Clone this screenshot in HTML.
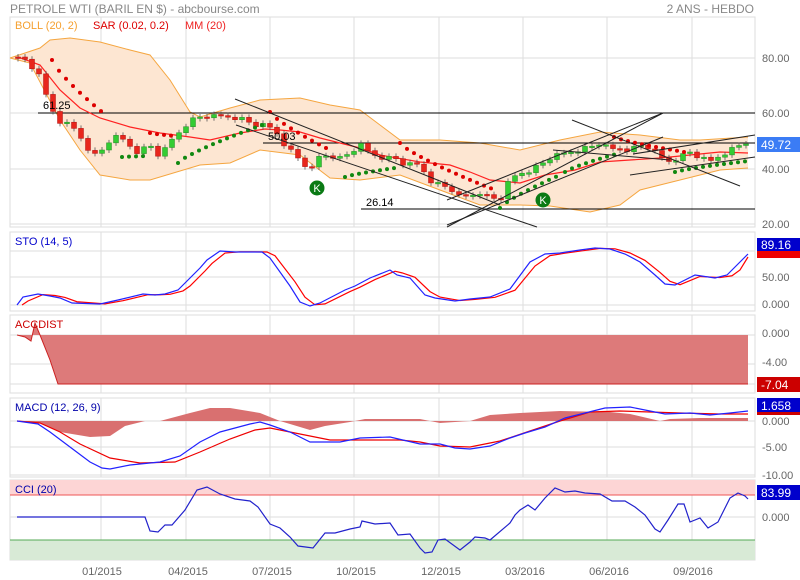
<!DOCTYPE html>
<html><head><meta charset="utf-8"><style>
html,body{margin:0;padding:0;background:#fff;width:800px;height:580px;overflow:hidden}
svg{display:block;font-family:"Liberation Sans",sans-serif}
</style></head><body>
<svg id="s" width="800" height="580" xmlns="http://www.w3.org/2000/svg">
<text x="10" y="13" font-size="12" fill="#888">PETROLE WTI (BARIL EN $) - abcbourse.com</text>
<text x="754" y="13" font-size="12" fill="#888" text-anchor="end">2 ANS - HEBDO</text>
<g id="grid" stroke="#ddd" stroke-width="1" fill="none"></g>
<g id="g"></g>
<g font-size="11">
<text x="15" y="29" fill="#f5a030">BOLL (20, 2)</text>
<text x="93" y="29" fill="#d00">SAR (0.02, 0.2)</text>
<text x="185" y="29" fill="#e22">MM (20)</text>
<text x="15" y="245" fill="#00c">STO (14, 5)</text>
<text x="15" y="328" fill="#c00">ACCDIST</text>
<text x="15" y="411" fill="#00a">MACD (12, 26, 9)</text>
<text x="15" y="493" fill="#00a">CCI (20)</text>
</g>
<g font-size="11" fill="#666">
<text x="762" y="62">80.00</text><text x="762" y="117">60.00</text><text x="762" y="173">40.00</text><text x="762" y="228">20.00</text>
<text x="762" y="281">50.00</text><text x="762" y="308">0.000</text>
<text x="762" y="337">0.000</text><text x="762" y="366">-4.00</text>
<text x="762" y="425">0.000</text><text x="762" y="451">-5.00</text><text x="762" y="479">-10.00</text>
<text x="762" y="521">0.000</text>
<text x="102" y="575" text-anchor="middle">01/2015</text><text x="188" y="575" text-anchor="middle">04/2015</text>
<text x="272" y="575" text-anchor="middle">07/2015</text><text x="356" y="575" text-anchor="middle">10/2015</text>
<text x="441" y="575" text-anchor="middle">12/2015</text><text x="525" y="575" text-anchor="middle">03/2016</text>
<text x="609" y="575" text-anchor="middle">06/2016</text><text x="693" y="575" text-anchor="middle">09/2016</text>
</g>
<rect x="757" y="137" width="43" height="15" fill="#3b7cf5"/><text x="761" y="149" font-size="12" fill="#fff">49.72</text>
<rect x="757" y="248" width="43" height="10" fill="#e00"/>
<rect x="757" y="238" width="43" height="13" fill="#00c"/><text x="761" y="249" font-size="12" fill="#fff">89.16</text>
<rect x="757" y="377" width="43" height="15" fill="#c00"/><text x="761" y="389" font-size="12" fill="#fff">-7.04</text>
<rect x="757" y="411" width="43" height="4" fill="#c00"/>
<rect x="757" y="398" width="43" height="14" fill="#00c"/><text x="761" y="410" font-size="12" fill="#fff">1.658</text>
<rect x="757" y="485" width="43" height="15" fill="#00c"/><text x="761" y="497" font-size="12" fill="#fff">83.99</text>
</svg>
<script>
var NS="http://www.w3.org/2000/svg",G=document.getElementById('g'),GR=document.getElementById('grid');
function el(t,a,p){var e=document.createElementNS(NS,t);for(var k in a)e.setAttribute(k,a[k]);(p||G).appendChild(e);return e;}
function pts(a){return a.map(function(p){return p[0]+','+p[1]}).join(' ');}
function interp(k,x){for(var i=0;i<k.length-1;i++){if(x>=k[i][0]&&x<=k[i+1][0]){var t=(x-k[i][0])/(k[i+1][0]-k[i][0]);return k[i][1]+t*(k[i+1][1]-k[i][1]);}}return x<k[0][0]?k[0][1]:k[k.length-1][1];}
// panels
var panels=[[17,227],[232,311],[315,393],[398,477],[480,560]];
var vx=[101,186,270,354,439,523,607,692];
panels.forEach(function(p){
 el('rect',{x:10,y:p[0],width:745,height:p[1]-p[0]},GR);
 vx.forEach(function(x){el('line',{x1:x,y1:p[0],x2:x,y2:p[1]},GR);});
});
[58,113,169,224,251,277,305,335,364,384,421,447,475,495,517,540].forEach(function(y){el('line',{x1:10,y1:y,x2:755,y2:y},GR);});
// CCI zones
el('rect',{x:10,y:480,width:745,height:15,fill:'#fdd5d5'});
el('line',{x1:10,y1:495,x2:755,y2:495,stroke:'#e55'});
el('rect',{x:10,y:540,width:745,height:20,fill:'#d8ead6'});
el('line',{x1:10,y1:540,x2:755,y2:540,stroke:'#5a5'});
// Bollinger
var up=[[10,58],[40,48],[50,40],[70,38],[100,42],[130,50],[150,55],[170,80],[190,112],[200,117],[230,108],[260,100],[300,98],[330,105],[360,110],[380,125],[400,140],[440,140],[480,143],[520,150],[560,140],[600,132],[640,135],[680,140],[700,140],[748,137]];
var lo=[[10,58],[30,63],[60,120],[80,150],[100,175],[130,180],[150,180],[200,165],[230,163],[260,150],[300,155],[330,178],[360,180],[400,175],[440,190],[480,205],[520,205],[550,206],[590,212],[620,205],[640,190],[680,180],[720,170],[748,168]];
el('polygon',{points:pts(up.concat(lo.slice().reverse())),fill:'#fde6d2',stroke:'none'});
el('polyline',{points:pts(up),fill:'none',stroke:'#f5a640','stroke-width':1});
el('polyline',{points:pts(lo),fill:'none',stroke:'#f5a640','stroke-width':1});
// horizontal lines
[[38,113],[263,143],[361,209]].forEach(function(h){el('line',{x1:h[0],y1:h[1],x2:755,y2:h[1],stroke:'#000','stroke-width':1});});
// MA
var ma=[[18,57],[40,65],[60,90],[80,108],[100,118],[130,127],[160,133],[190,137],[210,140],[240,133],[265,129],[280,130],[300,132],[320,138],[340,143],[360,148],[380,155],[420,162],[450,165],[470,172],[490,180],[520,183],[545,175],[575,170],[600,162],[630,160],[660,158],[690,155],[720,152],[748,153]];
el('polyline',{points:pts(ma),fill:'none',stroke:'#f22','stroke-width':1.2});
// candles
var ck=[[18,57],[25,60],[32,68],[40,72],[47,100],[58,121],[68,125],[78,132],[85,145],[95,155],[102,150],[110,140],[118,137],[128,143],[135,152],[145,148],[150,145],[160,157],[172,140],[185,125],[195,118],[205,116],[215,117],[225,116],[240,118],[255,125],[265,126],[275,130],[285,145],[295,155],[305,165],[313,170],[320,155],[330,155],[340,158],[350,153],[360,145],[370,153],[385,158],[395,158],[405,165],[420,165],[430,180],[440,185],[450,188],[460,198],[468,196],[480,192],[490,198],[500,199],[510,180],[520,173],[530,170],[540,165],[550,158],[560,155],[575,150],[590,147],[600,143],[610,150],[620,148],[630,150],[640,145],[650,148],[660,158],[670,161],[690,152],[700,158],[710,162],[720,155],[730,150],[740,145],[748,144]];
var prev=57,i=0;
for(var x=18;x<=748;x+=7){var c=interp(ck,x)+((i*37)%7-3)*0.8;if(x==18)c=57;if(x>=746)c=144;var o=prev;var t=Math.min(o,c),b=Math.max(o,c);if(b-t<1.5)b=t+1.5;var g=c<o;
 el('line',{x1:x,y1:t-3,x2:x,y2:b+3,stroke:'#555','stroke-width':0.8});
 el('rect',{x:x-2.5,y:t,width:5,height:b-t,fill:g?'#33cc33':'#e8261c',stroke:g?'#2a8a2a':'#b01010','stroke-width':0.5});
 prev=c;i++;}
// SAR
function dots(x1,y1,x2,y2,col){for(var x=x1;x<=x2;x+=7){var t=(x-x1)/((x2-x1)||1);var y=y1+(y2-y1)*Math.pow(t,0.8);el('circle',{cx:x,cy:y,r:2,fill:col});}}
dots(52,60,102,112,'#d00');dots(122,157,145,156,'#181');dots(150,133,175,136,'#d00');
dots(178,163,265,124,'#181');dots(270,112,330,150,'#d00');dots(345,177,395,168,'#181');
dots(400,143,495,190,'#d00');dots(500,208,560,175,'#181');dots(565,172,620,153,'#181');
dots(614,137,690,153,'#d00');dots(675,172,748,161,'#181');
// trendlines
[[235,99,500,205],[236,125,537,227],[447,227,663,113],[447,200,663,113],[447,225,663,137],[572,120,740,186],[630,175,755,157],[633,154,755,135],[553,150,670,160]].forEach(function(l){el('line',{x1:l[0],y1:l[1],x2:l[2],y2:l[3],stroke:'#222','stroke-width':1});});
// labels
[['61.25',43,109],['50.03',268,140],['26.14',366,206]].forEach(function(a){var t=el('text',{x:a[1],y:a[2],'font-size':11,fill:'#000'});t.textContent=a[0];});
[[317,188],[543,200]].forEach(function(k){el('circle',{cx:k[0],cy:k[1],r:7.5,fill:'#0a7a14'});var t=el('text',{x:k[0],y:k[1]+4,'font-size':11,fill:'#fff','text-anchor':'middle'});t.textContent='K';});
// STO
var sto=[[17,305],[23,297],[38,294],[50,296],[60,298],[72,303],[100,304],[118,300],[143,294],[155,295],[165,294],[178,290],[185,283],[200,268],[207,260],[220,251],[235,252],[262,252],[270,258],[290,286],[300,302],[310,306],[320,303],[345,290],[355,286],[370,278],[390,270],[397,275],[410,278],[425,295],[435,298],[455,301],[470,299],[490,297],[510,289],[530,262],[545,254],[560,253],[580,250],[595,248],[610,249],[625,254],[640,262],[655,275],[665,284],[675,285],[695,275],[715,278],[727,275],[735,267],[748,254]];
var stor=sto.map(function(p,j){return [Math.min(748,p[0]+5),j==0?305:interp(sto,p[0]-3)];});
el('polyline',{points:pts(stor),fill:'none',stroke:'#f00','stroke-width':1.2});
el('polyline',{points:pts(sto),fill:'none',stroke:'#22f','stroke-width':1.2});
// ACCDIST
var ad=[[17,335],[25,337],[31,341],[35,323],[40,335],[50,360],[58,384],[748,384]];
el('polygon',{points:pts(ad.concat([[748,335]])),fill:'#dd7a7a',stroke:'none'});
el('polyline',{points:pts(ad),fill:'none',stroke:'#c22','stroke-width':1});
// MACD
var hist=[[17,421],[40,423],[60,432],[90,437],[110,436],[125,426],[145,421],[160,421],[190,413],[210,408],[230,408],[260,413],[280,421],[310,430],[325,426],[350,422],[365,419],[420,419],[440,423],[470,421],[490,415],[520,413],[560,411],[610,412],[630,414],[660,421],[670,419],[700,418],[748,418]];
el('polygon',{points:pts(hist.concat([[748,421]])),fill:'#d97070',stroke:'none'});
var mr=[[17,421],[40,423],[60,432],[80,444],[110,458],[140,463],[175,462],[200,452],[230,439],[255,430],[270,428],[300,434],[330,440],[360,440],[400,440],[420,442],[440,446],[470,447],[500,441],[530,431],[560,421],[590,412],[620,411],[650,412],[680,413],[720,414],[748,414]];
var mb=[[17,421],[38,424],[50,432],[70,447],[90,462],[102,468],[110,469],[130,465],[160,462],[180,456],[200,442],[220,432],[250,424],[260,422],[270,425],[290,432],[310,442],[340,442],[360,438],[390,437],[420,444],[440,444],[455,448],[470,449],[490,446],[510,438],[525,433],[545,427],[565,418],[585,413],[605,408],[630,407],[650,411],[665,414],[690,413],[710,415],[730,413],[748,411]];
el('polyline',{points:pts(mr),fill:'none',stroke:'#e00','stroke-width':1.2});
el('polyline',{points:pts(mb),fill:'none',stroke:'#22f','stroke-width':1.2});
// CCI
var cci=[[17,517],[145,517],[150,531],[158,532],[165,525],[172,525],[185,510],[197,490],[207,487],[220,494],[235,499],[250,501],[258,507],[270,524],[280,528],[290,537],[298,546],[313,548],[325,533],[335,533],[350,529],[360,527],[362,521],[375,524],[390,523],[398,535],[410,534],[420,548],[425,553],[432,552],[438,540],[445,539],[460,550],[470,542],[475,537],[485,538],[490,540],[510,523],[515,515],[520,510],[528,505],[535,510],[545,498],[555,488],[565,492],[575,491],[585,493],[600,494],[612,501],[625,501],[635,507],[645,515],[655,529],[660,532],[668,520],[678,504],[684,504],[690,522],[700,518],[708,528],[718,522],[730,498],[738,493],[745,496],[748,499]];
el('polyline',{points:pts(cci),fill:'none',stroke:'#22c','stroke-width':1.2});
</script>
</body></html>
